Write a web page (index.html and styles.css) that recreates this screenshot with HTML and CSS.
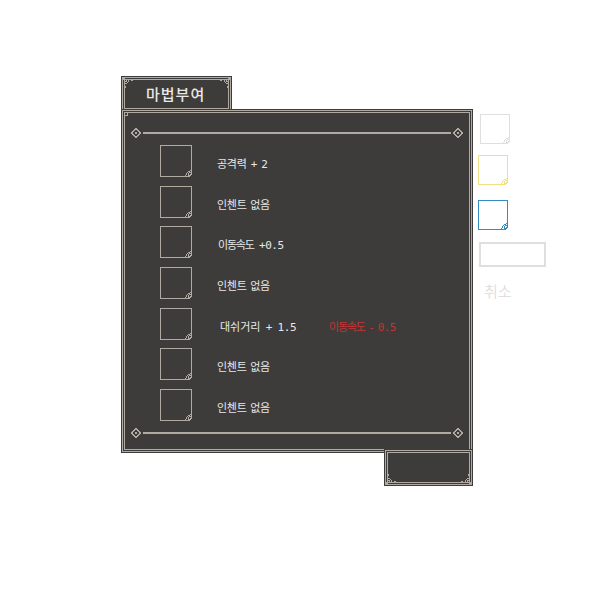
FILE: index.html
```html
<!DOCTYPE html>
<html lang="ko">
<head>
<meta charset="utf-8">
<title>마법부여</title>
<link rel="stylesheet" href="styles.css">
</head>
<body>
<svg class="defs" width="0" height="0">
  <symbol id="curl" viewBox="0 0 7 7"><path d="M5 0h2v1h-2zM3 1h2v1h-2zM6 1h1v4h-1zM2 2h1v1h-1zM4 2h2v1h-2zM1 3h1v2h-1zM3 3h1v2h-1zM5 4h1v1h-1zM0 5h1v1h-1zM3 5h3v1h-3zM0 6h5v1h-5z"/></symbol>
  <symbol id="gem" viewBox="0 0 10 10"><path fill-rule="evenodd" d="M4 0h2v1h1v1h1v1h1v1h1v2h-1v1h-1v1h-1v1h-1v1h-2v-1h-1v-1h-1v-1h-1v-1h-1v-2h1v-1h1v-1h1v-1h1zM4 2v1h-1v1h-1v2h1v1h1v1h2v-1h1v-1h1v-2h-1v-1h-1v-1zM4 4h2v2h-2z"/></symbol>
  <symbol id="corner" viewBox="0 0 11 11"><path d="M0 0h2v2h-2zM3 1h1v3h-1zM1 3h2v1h-2zM5 1h2v1h-2zM1 5h1v2h-1zM5 2h1v2h-1zM2 5h2v1h-2zM4 4h1v1h-1zM8 2h2v1h-2zM2 8h1v2h-1z"/></symbol>
</svg>
<main class="stage">
  <section class="window">
    <header class="tab">
      <svg class="corner tl"><use href="#corner"/></svg><svg class="corner tr"><use href="#corner"/></svg>
      <h1>마법부여</h1>
    </header>
    <div class="panel">
      <i class="notch"></i>
      <div class="rule"><svg><use href="#gem"/></svg><i></i><svg><use href="#gem"/></svg></div>
      <ul>
        <li><span class="slot"><svg><use href="#curl"/></svg></span><span class="t power">공격력<b> + 2</b></span></li>
        <li><span class="slot"><svg><use href="#curl"/></svg></span><span class="t none">인첸트 없음</span></li>
        <li><span class="slot"><svg><use href="#curl"/></svg></span><span class="t speed">이동속도<b> +0.5</b></span></li>
        <li><span class="slot"><svg><use href="#curl"/></svg></span><span class="t none">인첸트 없음</span></li>
        <li><span class="slot"><svg><use href="#curl"/></svg></span><span class="t dash">대쉬거리<b> + 1.5</b></span><span class="t loss">이동속도<b> - 0.5</b></span></li>
        <li><span class="slot"><svg><use href="#curl"/></svg></span><span class="t none">인첸트 없음</span></li>
        <li><span class="slot"><svg><use href="#curl"/></svg></span><span class="t none">인첸트 없음</span></li>
      </ul>
      <div class="rule"><svg><use href="#gem"/></svg><i></i><svg><use href="#gem"/></svg></div>
    </div>
    <footer class="tab foot">
      <svg class="corner bl"><use href="#corner"/></svg><svg class="corner br"><use href="#corner"/></svg>
    </footer>
  </section>
  <aside>
    <span class="slot gray"><svg><use href="#curl"/></svg></span>
    <span class="slot yellow"><svg><use href="#curl"/></svg></span>
    <span class="slot blue"><svg><use href="#curl"/></svg></span>
    <span class="box"></span>
    <span class="cancel">취소</span>
  </aside>
</main>
</body>
</html>
```
FILE: styles.css
```css
* { box-sizing: border-box; }
body { margin: 0; background: #fff; font-family: "Noto Sans CJK KR", sans-serif; }
.defs { position: absolute; }
.stage { display: flex; width: 600px; height: 600px; padding: 76px 0 0 121px; --dark: #3e3c3a; --line: #b1aaa3; }
.window { width: 352px; height: 410px; display: flex; flex-direction: column; }
svg { fill: currentColor; display: block; shape-rendering: crispEdges; }
.tab, .panel { position: relative; background: var(--dark); color: var(--line); border: 1px solid var(--dark); box-shadow: inset 0 0 0 1px var(--line), inset 0 0 0 2px var(--dark), inset 0 0 0 3px var(--line); }
.tab { width: 111px; height: 36px; flex: none; }
.panel { height: 344px; margin-top: -3px; flex: none; padding: 18px 9px 0; }
.tab h1 { margin: 0; padding: 7px 0 0 24px; font-size: 15px; line-height: 20px; font-weight: 500; letter-spacing: 1px; color: #e8e8e8; white-space: nowrap; }
.foot { width: 89px; height: 37px; margin: -4px 0 0 auto; }
.corner { position: absolute; width: 11px; height: 11px; }
.tl { left: 1px; top: 1px; }
.tr { right: 1px; top: 1px; transform: scaleX(-1); }
.bl { left: 1px; bottom: 1px; transform: scaleY(-1); }
.br { right: 1px; bottom: 1px; transform: scale(-1); }
.notch { position: absolute; left: 3px; top: 3px; width: 3px; height: 3px; border: solid var(--line); border-width: 0 1px 1px 0; }
.rule { display: flex; align-items: center; justify-content: space-between; height: 10px; }
.rule svg { width: 10px; height: 10px; }
.rule i { width: 308px; height: 2px; background: var(--line); }
ul { list-style: none; margin: 7px 0 0; padding: 0 0 0 29px; height: 283px; }
li { display: flex; height: 40.7px; }
.slot { position: relative; display: block; width: 32px; height: 32px; border: 1px solid; flex: none; }
.slot svg { position: absolute; right: -1px; bottom: -1px; width: 7px; height: 7px; background: var(--dark); }
.t { margin-left: 25px; padding-top: 8px; font-size: 11px; line-height: 20px; color: #e8e8e8; white-space: pre; }
.t b { font: 400 11px/1 "DejaVu Sans Mono", monospace; letter-spacing: -.4px; word-spacing: -2px; }
.power { letter-spacing: -.3px; }
.none { letter-spacing: -.3px; word-spacing: 1px; }
.speed { letter-spacing: -1.2px; margin-left: 26px; }
.speed b { margin-left: 1px; letter-spacing: -.4px; }
.dash { margin-left: 28px; width: 80px; letter-spacing: 0; }
.dash b { letter-spacing: -.3px; word-spacing: -1px; }
.loss { margin-left: 29px; letter-spacing: -1.2px; color: #c43535; }
.loss b { letter-spacing: -.6px; word-spacing: -2.5px; }
aside { display: flex; flex-direction: column; padding: 38px 0 0 5px; }
aside .slot { width: 30px; height: 30px; }
aside .slot svg { background: #fff; }
.gray { color: #dfdfdf; margin-left: 2px; }
.yellow { color: #f1df83; margin-top: 11px; }
.blue { color: #328bc3; margin-top: 15px; }
.box { width: 67px; height: 25px; border: 2px solid #dfdfdf; margin: 12px 0 0 1px; }
.cancel { margin: 13px 0 0 6px; font-size: 15px; line-height: 22px; letter-spacing: 0; color: #dfdfdf; }
```
